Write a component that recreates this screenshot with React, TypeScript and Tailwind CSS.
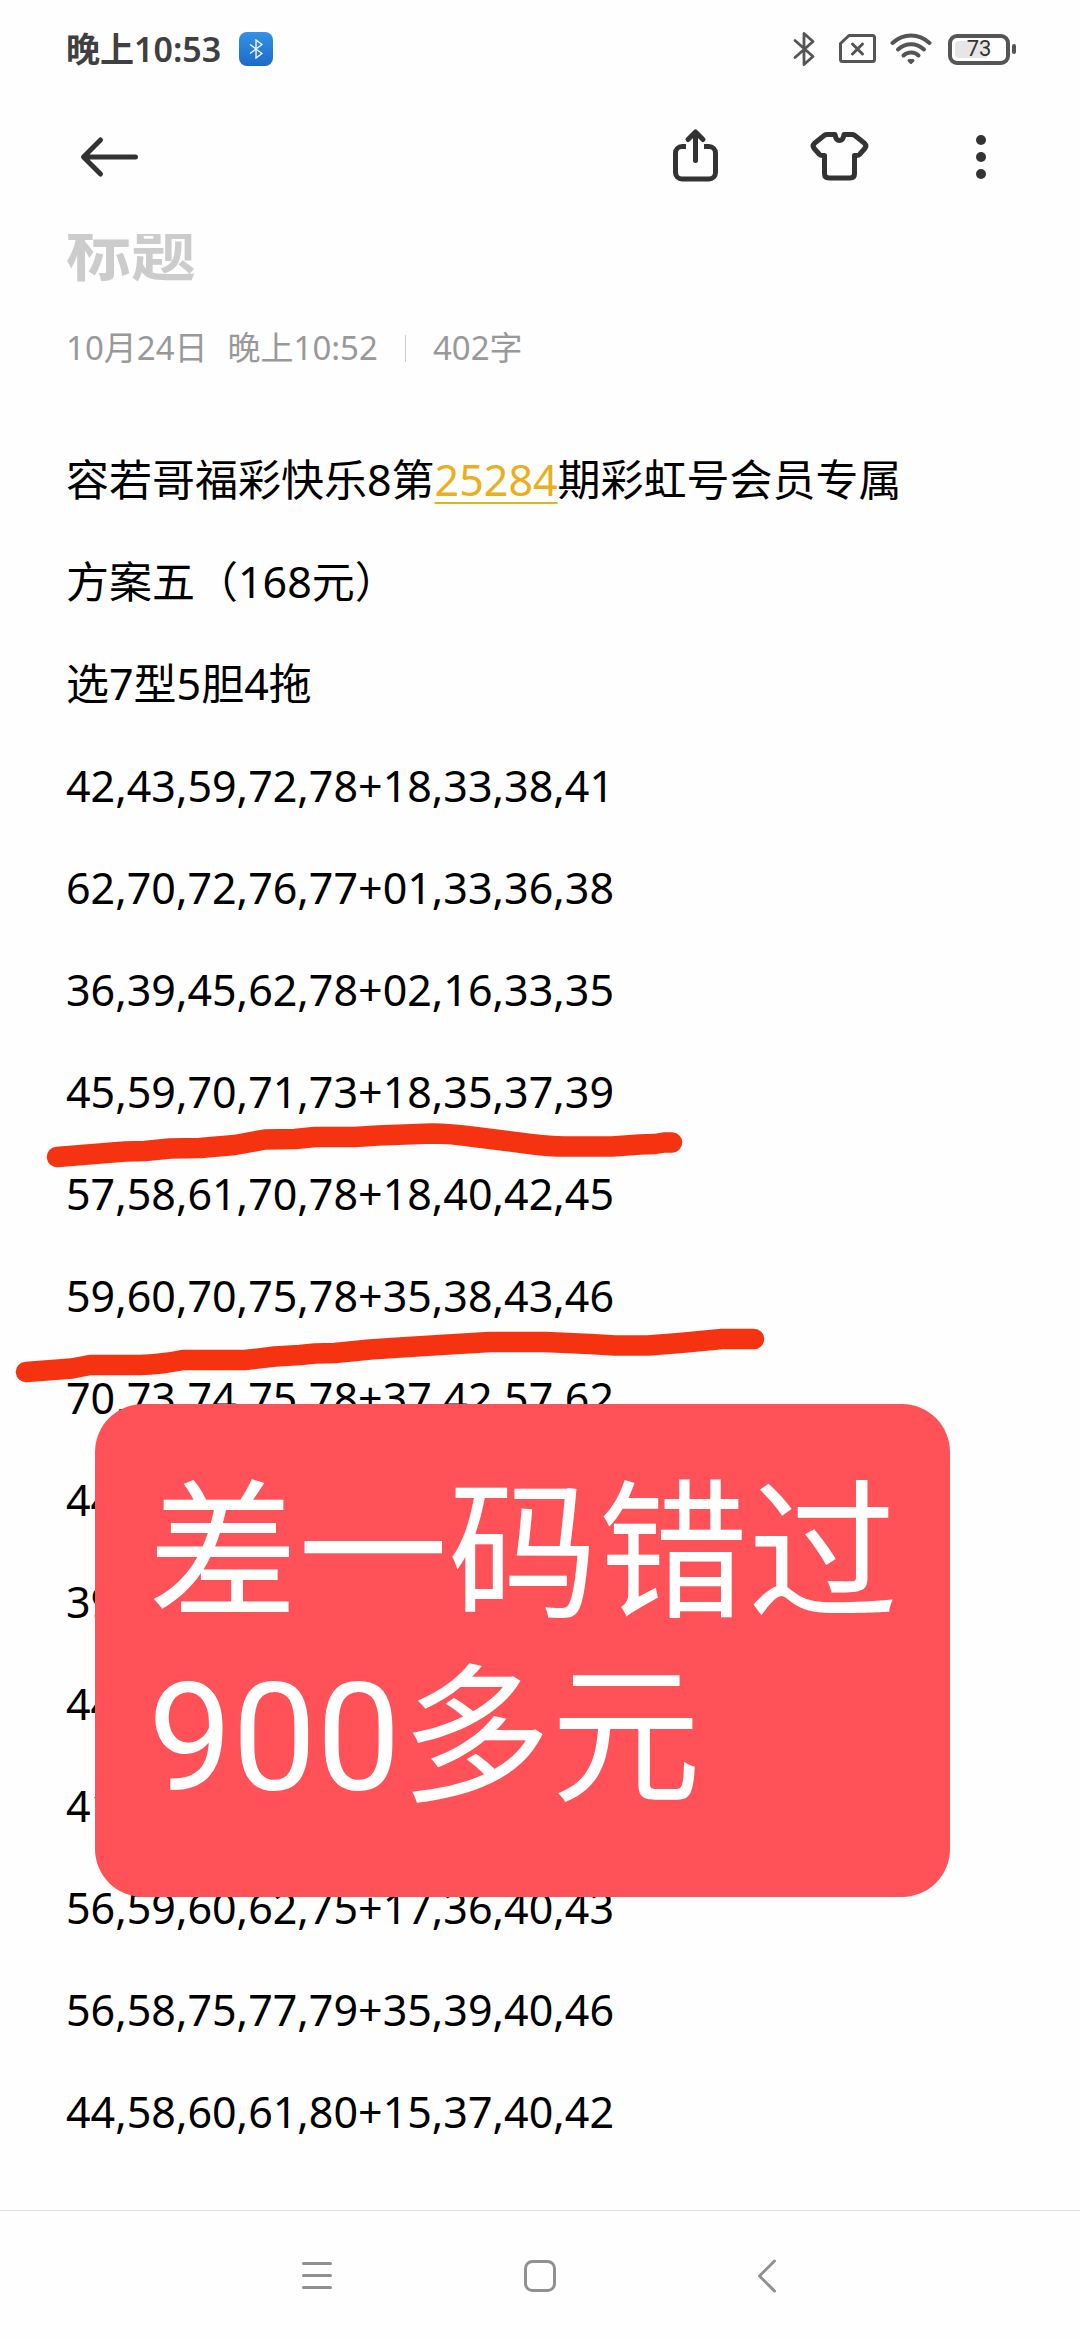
import React from 'react';

const plans = [
  '42,43,59,72,78+18,33,38,41',
  '62,70,72,76,77+01,33,36,38',
  '36,39,45,62,78+02,16,33,35',
  '45,59,70,71,73+18,35,37,39',
  '57,58,61,70,78+18,40,42,45',
  '59,60,70,75,78+35,38,43,46',
  '70,73,74,75,78+37,42,57,62',
  '44',
  '39',
  '44',
  '41',
  '56,59,60,62,75+17,36,40,43',
  '56,58,75,77,79+35,39,40,46',
  '44,58,60,61,80+15,37,40,42',
];

const StatusBar: React.FC = () => (
  <div className="flex h-[98px] items-center justify-between pl-[66px] pr-16 text-[#555]">
    <div className="flex items-center gap-[18px]">
      <span className="text-[34px] font-semibold leading-10 text-[#404040]">晚上10:53</span>
      <span className="flex h-[34px] w-[34px] items-center justify-center rounded-lg bg-linear-to-b from-[#3391e6] to-[#1e6cc8]">
        <svg width="14" height="20" viewBox="0 0 14 20" fill="none" stroke="white" strokeWidth="1.3">
          <path d="M1 5.5 13 14.5 7 19V1l6 4.5-12 9" />
        </svg>
      </span>
    </div>
    <div className="flex items-center gap-3.5">
      {/* Bluetooth */}
      <svg width="32" height="36" viewBox="0 0 32 36" fill="none" stroke="currentColor" strokeWidth="2.8" strokeLinecap="round" strokeLinejoin="round">
        <path d="M3 9.5 21 25.5 12 33.5V2.5l9 8L3 26.5" />
      </svg>
      {/* No SIM */}
      <svg width="38" height="36" viewBox="0 0 38 36" fill="none" stroke="currentColor" strokeWidth="3" strokeLinecap="round" strokeLinejoin="round">
        <path d="M11 4.500h23.5a2 2 0 0 1 2 2v22a2 2 0 0 1-2 2h-30a2 2 0 0 1-2-2V12.500z" />
        <path d="m14.500 13 10 10m0-10-10 10" />
      </svg>
      {/* Wi-Fi */}
      <svg width="42" height="36" viewBox="0 0 42 36" fill="none" stroke="currentColor" strokeWidth="4" strokeLinecap="round">
        <path d="M2.5 12C13.5 2 28.5 2 39.5 12" />
        <path d="M8 18.5C15.500 11.500 26.500 11.500 34 18.5" />
        <path d="M13.5 24.5C17.5 20.5 24.5 20.5 28.5 24.5" />
        <path d="M19 29.5 21 31.5 23 29.5Z" strokeWidth="3" fill="currentColor" strokeLinejoin="round" />
      </svg>
      {/* Battery */}
      <div className="flex w-[70px] items-center gap-0.5 pl-0.5">
        <div className="relative flex h-[31px] w-[62px] items-center justify-center rounded-[9px] border-4 border-[#555]">
          <div className="absolute inset-y-[3px] left-[3px] w-8 rounded-l-sm bg-[#e6e6e6]" />
          <span className="relative font-[Roboto] text-[22px] leading-6 text-[#333]">73</span>
        </div>
        <div className="h-[10px] w-1 rounded-sm bg-[#555]" />
      </div>
    </div>
  </div>
);

const Toolbar: React.FC = () => (
  <div className="flex h-[118px] items-center justify-between pl-[78px] pr-[65px] text-[#333]">
    <button type="button" aria-label="返回">
      <svg width="64" height="64" viewBox="0 0 64 64" fill="none" stroke="currentColor" strokeWidth="5" strokeLinecap="round" strokeLinejoin="round">
        <path d="M57.5 32H6M22.5 15 5.5 32 22.5 49" />
      </svg>
    </button>
    <div className="flex items-center gap-20">
      <button type="button" aria-label="分享">
        <svg width="64" height="64" viewBox="0 0 64 64" fill="none" stroke="currentColor" strokeWidth="5" strokeLinejoin="round">
          <path d="M23 21.5h-4a6.5 6.5 0 0 0-6.5 6.5v19.5a6.5 6.5 0 0 0 6.5 6.5h27a6.5 6.5 0 0 0 6.5-6.5V28a6.5 6.5 0 0 0-6.5-6.5h-5" />
          <path d="M32.5 7.5v28M25 14.5 32.5 7l7.5 7.5" strokeLinecap="round" />
        </svg>
      </button>
      <button type="button" aria-label="皮肤">
        <svg width="64" height="64" viewBox="0 0 64 64" fill="none" stroke="currentColor" strokeWidth="5" strokeLinejoin="round">
          <path d="M28 9.5H20Q18.500 9.5 17.500 10.3L7.500 18.3Q5 20.8 7.2 23.5L12.500 29.5Q13.500 30.5 15.500 30.5H17.500V48.5Q17.500 53 22 53H43Q47.500 53 47.500 48.5V30.5H49.500Q51.500 30.5 52.500 29.5L57.8 23.5Q60 20.8 57.500 18.3L47.500 10.3Q46.500 9.5 45 9.5H37Q36 15.5 32.500 15.5 29 15.5 28 9.5Z" />
        </svg>
      </button>
      <button type="button" aria-label="更多">
        <svg width="64" height="64" viewBox="0 0 64 64" fill="currentColor">
          <circle cx="30" cy="15" r="5" />
          <circle cx="30" cy="32" r="5" />
          <circle cx="30" cy="49" r="5" />
        </svg>
      </button>
    </div>
  </div>
);

const Markers: React.FC = () => (
  <svg className="pointer-events-none absolute left-0 top-[679px]" width="800" height="280" viewBox="0 1108 800 280" fill="none" stroke="#f53310" strokeWidth="20.5" strokeLinecap="round" strokeLinejoin="round">
    <path d="M57 1157 125 1151.5 145 1151 170 1148.5 200 1148 235 1145 265 1139.5 295 1139 315 1137 355 1137 378 1135.5 432 1133.5Q450 1133.5 475 1137L530 1144Q550 1146.5 565 1146.5H612L640 1144.5 655 1144 664 1142.5H672" />
    <path d="M26 1372 72 1368.5 90 1365H140Q160 1364.5 183 1360H245L275 1356.5 300 1355 315 1353.5 335 1353 370 1349.5 400 1347.5 440 1345 490 1342H545L590 1344 615 1345.5H648L680 1343 722 1339H754" />
  </svg>
);

const Note: React.FC = () => (
  <main className="flex-1 overflow-hidden">
    <input
      type="text"
      aria-label="标题"
      placeholder="标题"
      className="-mt-6 block h-20 w-full bg-transparent px-[66px] text-[65px] font-bold leading-[80px] text-black outline-none placeholder:text-[#ccc]"
    />
    <div className="mt-[38px] flex h-10 items-center px-[66px] text-[33px] leading-10 text-[#999]">
      <span>10月24日</span>
      <span className="ml-5">晚上10:52</span>
      <span className="mx-[27px] h-[27px] w-px bg-[#ccc]" />
      <span>402字</span>
    </div>

    <div className="relative mt-[61px] text-[43px] leading-[102px] text-black">
      <div className="px-[66px]">
        <p>
          容若哥福彩快乐8第
          <a href="#25284" className="text-[#ebae1c] underline decoration-2 underline-offset-6">25284</a>
          期彩虹号会员专属
        </p>
        <p>方案五（168元）</p>
        <p>选7型5胆4拖</p>
        {plans.map((plan, i) => (
          <p key={i}>{plan}</p>
        ))}
      </div>

      <Markers />

      {/* Sticker */}
      <div className="absolute left-[95px] top-[975px] w-[855px] rounded-[48px] bg-[#ff5158] pb-[66px] pl-[53px] pt-[59px] font-['Roboto','Noto_Sans_CJK_SC',sans-serif] text-[150px] leading-[184px] text-white">
        差一码错过
        <br />
        900多元
      </div>
    </div>
  </main>
);

const NavBar: React.FC = () => (
  <nav className="flex h-[130px] items-center justify-center gap-[180px] border-t border-[#e0e0e0] text-[#909090]">
    <button type="button" aria-label="最近任务">
      <svg width="44" height="44" viewBox="0 0 44 44" fill="none" stroke="currentColor" strokeWidth="3" strokeLinecap="round">
        <path d="M9.5 9.5h27M9.5 21.5h27M9.5 33.5h27" />
      </svg>
    </button>
    <button type="button" aria-label="主屏幕">
      <svg width="44" height="44" viewBox="0 0 44 44" fill="none" stroke="currentColor" strokeWidth="3">
        <rect x="7.5" y="7.5" width="29" height="29" rx="7" />
      </svg>
    </button>
    <button type="button" aria-label="返回上一页">
      <svg width="44" height="44" viewBox="0 0 44 44" fill="none" stroke="currentColor" strokeWidth="3" strokeLinecap="round" strokeLinejoin="round">
        <path d="M32.5 7 17.5 22 32.500 37" />
      </svg>
    </button>
  </nav>
);

export default function App() {
  return (
    <div className="flex min-h-screen flex-col bg-[#fefefe] font-['Noto_Sans','Noto_Sans_CJK_SC',sans-serif]">
      <header className="pb-[18px]">
        <StatusBar />
        <Toolbar />
      </header>
      <Note />
      <NavBar />
    </div>
  );
}
